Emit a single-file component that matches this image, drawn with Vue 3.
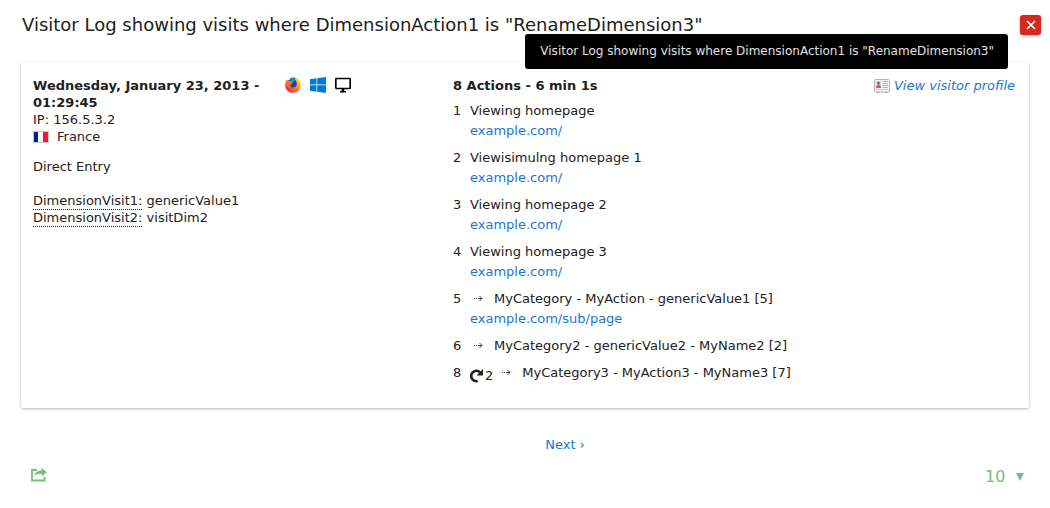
<script setup>
import { ref } from 'vue'

const title = 'Visitor Log showing visits where DimensionAction1 is "RenameDimension3"'
const limit = ref('10')
const dimensions = [
  { name: 'DimensionVisit1:', value: 'genericValue1' },
  { name: 'DimensionVisit2:', value: 'visitDim2' },
]
const actions = [
  { n: 1, text: 'Viewing homepage', url: 'example.com/' },
  { n: 2, text: 'Viewisimulng homepage 1', url: 'example.com/' },
  { n: 3, text: 'Viewing homepage 2', url: 'example.com/' },
  { n: 4, text: 'Viewing homepage 3', url: 'example.com/' },
  { n: 5, text: 'MyCategory - MyAction - genericValue1 [5]', url: 'example.com/sub/page', event: true },
  { n: 6, text: 'MyCategory2 - genericValue2 - MyName2 [2]', event: true },
  { n: 8, text: 'MyCategory3 - MyAction3 - MyName3 [7]', event: true, repeat: 2 },
]
</script>

<template>
  <main class="page">
    <header class="top">
      <h1>{{ title }}</h1>
      <button class="close" type="button" aria-label="Close">
        <svg width="10" height="10" viewBox="0 0 10 10"><path d="M1 1l8 8M9 1l-8 8" stroke="#fff" stroke-width="1.7" fill="none" /></svg>
      </button>
      <div class="tooltip" role="tooltip">{{ title }}</div>
    </header>

    <section class="card">
      <div class="visit">
        <strong>Wednesday, January 23, 2013 - 01:29:45</strong>
        <div>IP: 156.5.3.2</div>
        <div class="country">
          <svg width="16" height="12" viewBox="0 0 16 12">
            <rect width="16" height="12" fill="#ccc" />
            <rect x="1" y="1" width="14" height="10" fill="#fff" />
            <rect x="1" y="1" width="4" height="10" fill="#00267f" />
            <rect x="10" y="1" width="5" height="10" fill="#f31830" />
          </svg>
          <span>France</span>
        </div>
        <div class="referrer">Direct Entry</div>
        <div v-for="d in dimensions" :key="d.name"><span class="dim">{{ d.name }}</span> {{ d.value }}</div>
      </div>

      <div class="icons">
        <svg width="16" height="16" viewBox="0 0 16 16">
          <defs>
            <linearGradient id="fox" x1="1" y1="0" x2="0.2" y2="1">
              <stop offset="0" stop-color="#fff44f" />
              <stop offset="0.35" stop-color="#ffb41f" />
              <stop offset="0.65" stop-color="#ff6a20" />
              <stop offset="1" stop-color="#e9175c" />
            </linearGradient>
          </defs>
          <circle cx="8" cy="8" r="6.6" fill="#174a9c" />
          <path d="M5 1.2C7 .2 10 .4 11.6 1.8L9 5 5.5 4z" fill="#1f7fd0" />
          <path d="M10 .3c3.6 1.3 5.8 4.2 5.8 8 0 4.2-3.4 7.5-7.8 7.5S.2 12.500.2 8.200C.2 5.900.9 4.100 2 2.400l.5 1.700C3.400 3.500 4.600 3.500 5.600 4.100L8 5 6.300 6.800l-.9 1.100c0 2 1.500 2.900 3.200 2.600 2.200-.2 3.600-1.900 3.200-4.200C11.600 3.800 9.600 2.800 10 .3z" fill="url(#fox)" />
          <path d="M1 4.500l1.200-1.800.5 1.500C3.600 3.800 4.800 3.900 5.600 4.400L7.600 5.300 5.200 7.500C3.800 7.200 3.200 8.800 4 10.500 1.800 9.200 1 7 1 4.500z" fill="#ff6b24" />
        </svg>
        <svg width="16" height="16" viewBox="0 0 16 16" fill="#0078d7">
          <path d="M0 2.200L6.500 1.300V7.600H0zM7.200 1.200L16 0V7.600H7.200zM0 8.300h6.500v6.400L0 13.800zM7.200 8.300H16V16l-8.800-1.200z" />
        </svg>
        <svg width="16" height="16" viewBox="0 0 16 16">
          <rect x="0.800" y="1.500" width="14.400" height="10" rx="0.800" fill="none" stroke="#000" stroke-width="1.700" />
          <path d="M6.700 12h2.600v2H11v1.400H5V14h1.700z" />
        </svg>
      </div>

      <div class="log">
        <div class="log-head">
          <strong>8 Actions - 6 min 1s</strong>
          <a class="profile" href="#">
            <svg width="16" height="14" viewBox="0 0 16 14">
              <rect x="0.500" y="0.500" width="15" height="12.500" rx="1" fill="#f2f2f2" stroke="#b4b4b4" />
              <rect x="2" y="2" width="5" height="6.500" fill="#d5dbe6" />
              <circle cx="4.500" cy="4" r="1.500" fill="#9b6558" />
              <path d="M2 9c0-4.500 5-4.500 5 0z" fill="#d9544c" />
              <path d="M8.500 2.500H14M8.500 4.500H14M8.500 6.500H14M8.500 8.500H14" stroke="#b4b8bf" />
              <path d="M2 10.500h12" stroke="#d0d0d0" />
              <path d="M3 13.500h2M11 13.500h2" stroke="#999" />
            </svg>
            <span>View visitor profile</span>
          </a>
        </div>
        <ol>
          <li v-for="a in actions" :key="a.n">
            <span class="num">{{ a.n }}</span>
            <div>
              <div class="action">
                <span v-if="a.repeat" class="repeat">
                  <svg width="14" height="14" viewBox="0 0 14 14">
                    <path d="M7.600 12A5.200 5.200 0 1 1 10 3.200" fill="none" stroke="#212121" stroke-width="2.600" />
                    <path d="M13 0V6.500H6.500z" fill="#212121" />
                  </svg>
                  <span>{{ a.repeat }}</span>
                </span>
                <svg v-if="a.event" class="arrow" width="16" height="16" viewBox="0 0 16 16">
                  <path d="M4 7.500h1M6 7.500h1M8 7.500h4M9.500 5l2.500 2.500L9.500 10" fill="none" stroke="#444" />
                </svg>
                <span>{{ a.text }}</span>
              </div>
              <a v-if="a.url" href="#">{{ a.url }}</a>
            </div>
          </li>
        </ol>
      </div>
    </section>

    <nav class="pager"><a href="#">Next ›</a></nav>

    <footer class="tools">
      <button class="export" type="button" aria-label="Export">
        <svg width="16" height="14" viewBox="0 0 16 14">
          <path d="M6 2H1v10.500h12.500V9" fill="none" stroke="#77bd7b" stroke-width="1.800" />
          <path d="M10.500 0L16 4.200l-5.500 4V5.800C7.500 5.600 5 6.200 3.500 8.500 4 4.500 6.500 2.600 10.500 2.500z" fill="#77bd7b" />
        </svg>
      </button>
      <label class="limit">
        <select v-model="limit" aria-label="Rows per page">
          <option>10</option>
          <option>25</option>
          <option>50</option>
        </select>
        <svg width="8" height="8" viewBox="0 0 8 8"><path d="M0 0h8L4 8z" fill="#77bd7b" /></svg>
      </label>
    </footer>
  </main>
</template>

<style>
body {
  background: #fff;
}
</style>

<style scoped>
.page {
  padding: 10px 21px 16px;
  font: 13px/17px "DejaVu Sans", sans-serif;
  color: #212121;
}
svg {
  display: block;
  flex: none;
}
a {
  color: #1976d2;
  text-decoration: none;
}
button {
  padding: 0;
  border: 0;
  background: none;
  cursor: pointer;
}
.top {
  position: relative;
  display: flex;
  justify-content: space-between;
  height: 52px;
}
h1 {
  margin: 0 0 0 1px;
  font-size: 18px;
  line-height: 30px;
  font-weight: 400;
}
.close {
  display: grid;
  place-items: center;
  width: 21px;
  height: 20px;
  margin: 5px -12px 0 0;
  border-radius: 3px;
  background: #d4291f;
  box-shadow: 0 1px 3px rgba(0, 0, 0, 0.3);
}
.tooltip {
  position: absolute;
  top: 24px;
  right: 21px;
  padding: 9px 14px 9px 15px;
  border-radius: 3px;
  background: #000;
  color: #e0e0e0;
  font-size: 12px;
  white-space: nowrap;
}
.card {
  display: grid;
  grid-template-columns: 252fr 168fr 562fr;
  padding: 15px 14px 18px 12px;
  border-radius: 2px;
  box-shadow: 0 1px 3px rgba(0, 0, 0, 0.3);
}
.visit strong {
  display: block;
}
.country {
  display: flex;
  align-items: center;
  gap: 8px;
}
.referrer {
  margin: 13px 0 17px;
}
.dim {
  padding-bottom: 1px;
  border-bottom: 1px dotted #212121;
}
.icons {
  display: flex;
  gap: 9px;
}
.log-head {
  display: flex;
  justify-content: space-between;
}
.profile {
  display: flex;
  align-items: center;
  gap: 4px;
  font-style: italic;
}
ol {
  margin: 7px 0 0;
  padding: 0;
  list-style: none;
  line-height: 20px;
}
li {
  display: flex;
  margin-bottom: 7px;
}
.num {
  width: 17px;
}
.action,
.repeat {
  display: flex;
  align-items: center;
}
.repeat {
  gap: 1px;
  margin-right: 5px;
  padding-top: 6px;
  height: 14px;
}
.arrow {
  margin-right: 8px;
}
.pager {
  padding: 28px 0 0 80px;
  text-align: center;
}
.tools {
  display: flex;
  justify-content: space-between;
  align-items: center;
  padding: 12px 5px 0 10px;
}
.export {
  padding-bottom: 4px;
}
.limit {
  display: flex;
  align-items: center;
  gap: 10px;
}
select {
  appearance: none;
  padding: 0;
  border: 0;
  background: none;
  color: #77bd7b;
  font: 16px/24px "DejaVu Sans", sans-serif;
}
</style>
